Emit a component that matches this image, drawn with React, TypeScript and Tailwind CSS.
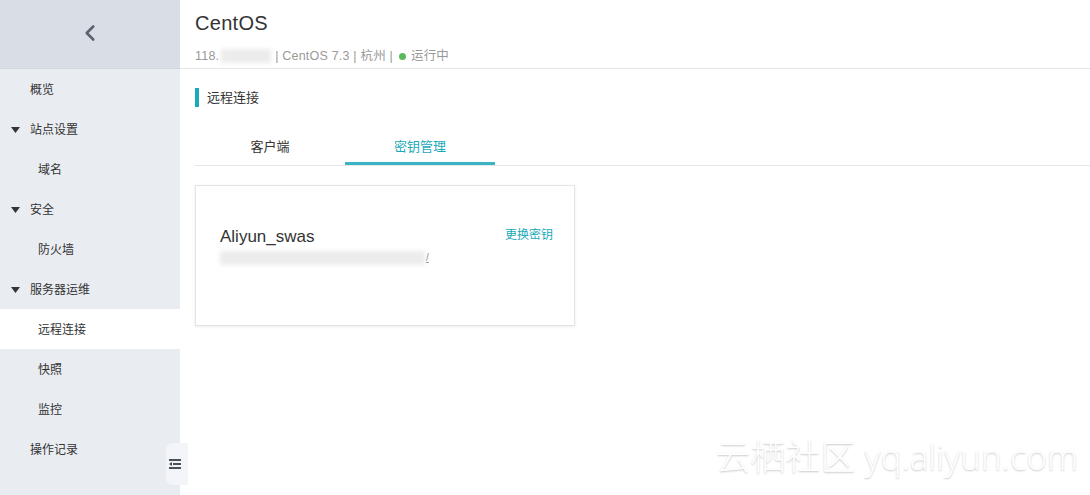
import { ChevronLeft } from "lucide-react";

const font = { fontFamily: '"Liberation Sans", "Noto Sans CJK SC", sans-serif' };

interface NavItem {
  label: string;
  level: 0 | 1;
  caret?: boolean;
  active?: boolean;
}

const nav: NavItem[] = [
  { label: "概览", level: 0 },
  { label: "站点设置", level: 0, caret: true },
  { label: "域名", level: 1 },
  { label: "安全", level: 0, caret: true },
  { label: "防火墙", level: 1 },
  { label: "服务器运维", level: 0, caret: true },
  { label: "远程连接", level: 1, active: true },
  { label: "快照", level: 1 },
  { label: "监控", level: 1 },
  { label: "操作记录", level: 0 },
];

function Sidebar() {
  return (
    <aside className="relative w-[180px] shrink-0 bg-[#e9edf2] flex flex-col">
      <div className="h-[69px] bg-[#d9dde5] flex items-center justify-center border-b border-[#d2d6de]">
        <ChevronLeft size={26} strokeWidth={2.4} className="text-[#5b6270] -mt-[2px]" />
      </div>
      {nav.map((item) => (
        <div
          key={item.label}
          className={
            "h-10 flex items-center pt-[2px] text-[12px] text-[#333] " +
            (item.active ? "bg-white" : "") +
            (item.level === 1 ? " pl-[38px]" : " pl-[11px]")
          }
        >
          {item.level === 0 && (
            <span className="w-[19px] flex items-center">
              {item.caret && (
                <svg width="9" height="6" viewBox="0 0 9 6">
                  <path d="M0 0h9L4.5 6z" fill="#333" />
                </svg>
              )}
            </span>
          )}
          <span>{item.label}</span>
        </div>
      ))}
      <div className="absolute left-[166px] top-[443px] w-[22px] h-[42px] bg-[#f3f5f8] rounded-l-[6px] flex items-center justify-start pl-[3px]">
        <svg width="12" height="12" viewBox="0 0 12 12">
          <rect x="0" y="1" width="12" height="2" fill="#4a505c" />
          <rect x="4" y="5" width="8" height="2" fill="#4a505c" />
          <rect x="0" y="9" width="12" height="2" fill="#4a505c" />
          <path d="M0 6l3-2v4z" fill="#4a505c" />
        </svg>
      </div>
    </aside>
  );
}

export default function App() {
  return (
    <div className="relative w-[1090px] h-[495px] flex bg-white overflow-hidden" style={font}>
      <Sidebar />
      <main className="flex-1 flex flex-col">
        <div className="h-[69px] border-b border-[#e3e6ea] pl-[15px] pt-[10px]">
          <div className="text-[20px] leading-[26px] text-[#333] tracking-[0.3px]">CentOS</div>
          <div className="mt-[11px] flex items-center text-[12.5px] text-[#999] tracking-[0.2px]">
            <span>118.</span>
            <span className="inline-block w-[50px] h-[14px] bg-[#ececec] blur-[2px] mx-[2px]" />
            <span className="ml-[2px]">| CentOS 7.3 | 杭州 |</span>
            <span className="ml-[6px] w-[7px] h-[7px] rounded-full bg-[#5cb85c]" />
            <span className="ml-[5px]">运行中</span>
          </div>
        </div>
        <div className="pl-[15px] pt-[19px]">
          <div className="flex items-center h-[19px] border-l-[4px] border-[#1aa9b9] pl-[8px] text-[13px] text-[#333]">
            远程连接
          </div>
        </div>
        <div className="ml-[15px] mt-[22px] flex border-b border-[#e3e6ea] text-[13px]">
          <div className="w-[150px] h-[36px] flex items-center justify-center text-[#333]">客户端</div>
          <div className="w-[150px] h-[36px] flex items-center justify-center text-[#1aa9b9] border-b-[3px] border-[#3ab4c2] -mb-px pt-[3px]">
            密钥管理
          </div>
        </div>
        <div className="ml-[15px] mt-[19px] w-[380px] h-[141px] border border-[#e4e4e4] shadow-[0_1px_3px_rgba(0,0,0,0.08)] flex justify-between pl-[24px] pr-[21px] pt-[40px]">
          <div>
            <div className="text-[17px] text-[#333] leading-[22px]">Aliyun_swas</div>
            <div className="mt-[2px] flex items-end">
              <span className="inline-block w-[205px] h-[14px] bg-[#ececec] blur-[2px]" />
              <span className="text-[10px] text-[#888] underline ml-[1px]">/</span>
            </div>
          </div>
          <div className="text-[12px] text-[#1aa9b9]">更换密钥</div>
        </div>
      </main>
      <div
        className="absolute right-[12px] bottom-[12px] text-[35px] text-white"
        style={{ textShadow: "0 1px 2px rgba(0,0,0,0.22)", fontFamily: '"Open Sans", "Noto Sans CJK SC", sans-serif', fontWeight: 300 }}
      >
        云栖社区 yq.aliyun.com
      </div>
    </div>
  );
}
